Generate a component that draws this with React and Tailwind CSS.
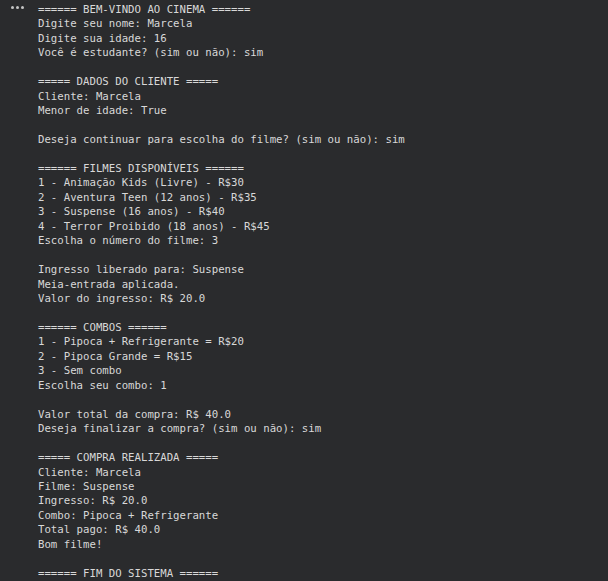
import React from "react"

const lines = [
  "====== BEM-VINDO AO CINEMA ======",
  "Digite seu nome: Marcela",
  "Digite sua idade: 16",
  "Você é estudante? (sim ou não): sim",
  "",
  "===== DADOS DO CLIENTE =====",
  "Cliente: Marcela",
  "Menor de idade: True",
  "",
  "Deseja continuar para escolha do filme? (sim ou não): sim",
  "",
  "====== FILMES DISPONÍVEIS ======",
  "1 - Animação Kids (Livre) - R$30",
  "2 - Aventura Teen (12 anos) - R$35",
  "3 - Suspense (16 anos) - R$40",
  "4 - Terror Proibido (18 anos) - R$45",
  "Escolha o número do filme: 3",
  "",
  "Ingresso liberado para: Suspense",
  "Meia-entrada aplicada.",
  "Valor do ingresso: R$ 20.0",
  "",
  "====== COMBOS ======",
  "1 - Pipoca + Refrigerante = R$20",
  "2 - Pipoca Grande = R$15",
  "3 - Sem combo",
  "Escolha seu combo: 1",
  "",
  "Valor total da compra: R$ 40.0",
  "Deseja finalizar a compra? (sim ou não): sim",
  "",
  "===== COMPRA REALIZADA =====",
  "Cliente: Marcela",
  "Filme: Suspense",
  "Ingresso: R$ 20.0",
  "Combo: Pipoca + Refrigerante",
  "Total pago: R$ 40.0",
  "Bom filme!",
  "",
  "====== FIM DO SISTEMA ======",
]

export default function App() {
  return (
    <div className="w-[608px] h-[581px] bg-[#2a2b2d] overflow-hidden flex">
      {/* output menu dots */}
      <div className="w-[38px] shrink-0 flex pl-[11px] pt-[6px]">
        <div className="flex gap-[2px] h-[3px]">
          <span className="w-[3px] h-[3px] rounded-full bg-[#c4c4c4]" />
          <span className="w-[3px] h-[3px] rounded-full bg-[#c4c4c4]" />
          <span className="w-[3px] h-[3px] rounded-full bg-[#c4c4c4]" />
        </div>
      </div>
      <pre className="pt-[3px] font-['DejaVu_Sans_Mono',monospace] text-[10.7px] leading-[14.46px] text-[#d8d8d8] whitespace-pre">
        {lines.map((l, i) => (
          <div key={i} className="h-[14.46px]">
            {l}
          </div>
        ))}
      </pre>
    </div>
  )
}
